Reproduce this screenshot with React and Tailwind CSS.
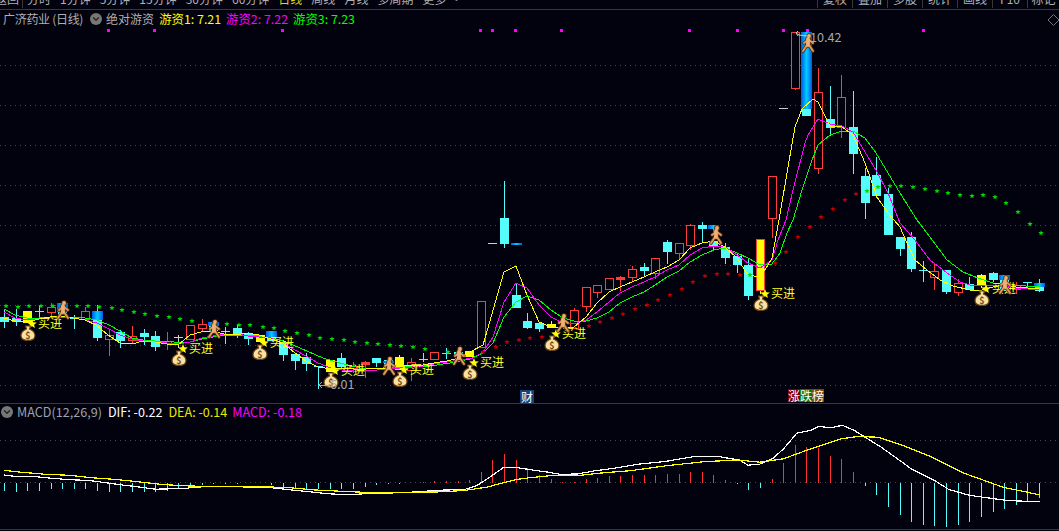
import { ChevronDown } from 'lucide-react'

const LEFT_TABS = ['分时', '1分钟', '5分钟', '15分钟', '30分钟', '60分钟', '日线', '周线', '月线', '多周期', '更多']
const RIGHT_TABS = ['复权', '叠加', '多股', '统计', '画线', 'F10', '标记']

const px = i => Math.round(4 + 11.63 * i) + 0.5

// [index, bodyTop, bodyBottom, high, low, type, blueTop, blueBottom]
const CANDLES = [
  [0, 317, 321, 310, 327, 'c'], [1, 318, 321, 309, 325, 'c'], [2, 311, 322, 311, 322, 'y'], [3, 311, 312, 305, 318, 'c'],
  [4, 307, 312, 303, 315, 'r'], [5, 309, 314, 309, 314, 'c', 303, 312], [6, 318, 319, 315, 328, 'c'], [7, 311, 319, 307, 319, 'r'],
  [8, 311, 337, 305, 340, 'c', 311, 320], [9, 335, 339, 329, 355, 'r'], [10, 332, 340, 330, 347, 'c'], [11, 336, 340, 326, 343, 'r'],
  [12, 333, 336, 329, 344, 'c'], [13, 336, 346, 331, 350, 'c'], [14, 341, 343, 332, 349, 'r'], [15, 337, 338, 335, 347, 'w'],
  [16, 325, 339, 325, 339, 'r'], [17, 324, 328, 319, 330, 'r'], [18, 325, 330, 325, 330, 'c', 322, 326], [19, 331, 332, 327, 343, 'c'],
  [20, 328, 335, 325, 337, 'c'], [21, 334, 338, 332, 344, 'c'], [22, 335, 341, 335, 341, 'y'], [23, 331, 340, 331, 340, 'c', 331, 337],
  [24, 342, 354, 340, 360, 'c'], [25, 354, 360, 354, 369, 'c'], [26, 357, 363, 353, 370, 'c'], [27, 366, 367, 366, 388, 'c'],
  [28, 360, 371, 360, 371, 'y'], [29, 358, 366, 353, 368, 'c'], [30, 366, 368, 362, 372, 'r'], [31, 362, 364, 361, 377, 'f'],
  [32, 358, 362, 358, 366, 'c'], [33, 360, 364, 360, 364, 'c', 361, 363], [34, 357, 369, 355, 369, 'y'], [35, 362, 370, 358, 380, 'r'],
  [36, 359, 360, 353, 361, 'c'], [37, 352, 359, 352, 359, 'r'], [38, 353, 354, 348, 358, 'c'], [39, 352, 356, 352, 356, 'c'],
  [40, 351, 356, 351, 356, 'y'], [41, 301, 347, 301, 347, 'r'], [42, 243, 244, 243, 244, 'w'], [43, 218, 243, 181, 247, 'c'],
  [44, 295, 307, 283, 307, 'c'], [45, 321, 327, 313, 328, 'c'], [46, 323, 328, 323, 331, 'c'], [47, 324, 327, 321, 327, 'y'],
  [48, 321, 323, 321, 323, 'c'], [49, 310, 328, 308, 328, 'r'], [50, 287, 306, 287, 311, 'r'], [51, 285, 292, 285, 297, 'r'],
  [52, 278, 289, 278, 289, 'r'], [53, 277, 279, 276, 290, 'f'], [54, 269, 277, 266, 280, 'r'], [55, 267, 270, 263, 275, 'c'],
  [56, 258, 273, 258, 278, 'r'], [57, 242, 251, 240, 263, 'c'], [58, 243, 253, 243, 258, 'r'], [59, 225, 245, 224, 249, 'r'],
  [60, 225, 228, 222, 241, 'c'], [61, 241, 245, 229, 249, 'c', 225, 229], [62, 247, 257, 243, 263, 'c'], [63, 256, 264, 253, 272, 'c'],
  [64, 265, 295, 258, 299, 'c'], [65, 239, 290, 239, 293, 'Y'], [66, 176, 218, 176, 237, 'r'], [67, 108, 109, 108, 109, 'w'],
  [68, 32, 88, 32, 89, 'r'], [69, 109, 115, 109, 115, 'c', 32, 109], [70, 92, 168, 68, 173, 'r'], [71, 119, 127, 86, 135, 'c'],
  [72, 97, 127, 75, 137, 'r'], [73, 127, 153, 91, 173, 'c'], [74, 176, 202, 168, 218, 'c'], [75, 175, 195, 157, 197, 'c'],
  [76, 194, 234, 188, 234, 'c'], [77, 237, 248, 237, 255, 'c'], [78, 237, 268, 232, 271, 'c'], [79, 270, 271, 261, 281, 'c'],
  [80, 271, 277, 263, 289, 'r'], [81, 270, 291, 270, 293, 'c'], [82, 283, 292, 279, 295, 'r'], [83, 284, 289, 277, 289, 'c'],
  [84, 275, 285, 274, 287, 'y'], [85, 273, 279, 272, 281, 'c'], [86, 277, 290, 275, 290, 'c', 275, 280], [87, 285, 289, 282, 293, 'r'],
  [88, 282, 283, 282, 288, 'c'], [89, 283, 290, 279, 291, 'c', 283, 287],
]

const YELLOW = '4,318 15,321 27,322 39,319 50,317 62,316 73,318 85,320 96,325 108,335 120,343 132,344 143,341 155,342 167,344 178,345 190,335 201,332 213,331 224,334 236,335 247,333 259,335 271,339 283,343 295,353 306,361 318,367 331,369 342,368 354,369 366,369 377,368 388,368 400,365 412,366 423,365 434,363 447,361 459,358 470,352 483,345 504,272 516,266 527,295 539,322 551,327 563,328 574,327 586,317 597,303 609,292 620,287 632,282 644,277 655,272 667,267 679,260 690,248 702,243 714,241 725,247 737,258 748,275 760,277 768,265 772,258 779,220 788,167 795,127 802,109 813,99 818,102 827,120 830,126 842,127 853,135 865,163 877,197 888,213 900,227 907,243 915,260 927,270 940,280 953,286 970,290 982,290 993,287 1004,285 1016,287 1028,288 1039,288'
const MAGENTA = '4,312 15,318 27,320 39,319 50,318 62,317 73,318 85,320 97,323 109,329 120,335 132,339 143,341 155,342 167,343 178,344 190,342 202,338 213,336 225,334 237,334 248,336 259,337 271,338 283,343 295,350 306,356 318,363 331,368 342,370 354,371 366,371 377,370 388,369 400,368 412,367 423,366 434,364 447,362 459,360 473,358 483,352 493,337 504,302 516,283 527,288 539,305 551,317 563,323 574,324 586,320 597,312 609,302 620,293 632,287 644,282 655,277 667,270 679,265 690,255 702,248 714,246 725,247 737,255 748,263 760,268 772,260 778,240 786,220 793,190 805,143 808,135 818,119 830,124 842,126 853,132 865,152 876,170 888,193 900,223 915,240 930,260 947,273 960,282 970,285 983,286 1004,285 1016,288 1039,290'
const GREEN = '4,309 15,315 27,318 39,318 50,317 62,317 73,317 85,318 97,320 109,325 120,331 132,338 143,340 155,341 168,341 180,343 190,342 202,339 213,337 225,335 237,335 248,335 259,336 271,338 283,341 293,345 323,358 340,363 360,368 383,368 403,367 430,366 450,363 470,359 483,353 493,343 504,317 516,302 527,296 539,300 551,310 563,318 574,321 586,321 597,318 609,312 620,303 632,297 644,292 655,285 667,277 679,271 690,262 702,255 714,250 725,248 737,253 748,258 760,265 772,264 780,253 787,233 793,220 802,190 812,160 818,145 830,135 842,131 853,131 865,138 876,153 888,173 900,193 917,220 930,237 947,260 963,272 978,278 993,283 1013,285 1039,287'

const GREEN_STARS = [[6,306],[18,307],[29,306],[41,306],[53,306],[77,306],[88,306],[99,307],[112,308],[122,310],[134,312],[145,314],[157,316],[169,317],[180,319],[192,321],[227,324],[239,325],[250,325],[263,327],[274,328],[285,331],[297,333],[309,335],[320,338],[332,339],[344,340],[355,342],[367,343],[378,344],[390,345],[401,346],[413,347],[425,349],[448,352],[750,275],[867,191],[878,187],[890,186],[901,186],[913,187],[925,189],[937,191],[948,193],[960,195],[972,196],[983,195],[995,197],[1006,203],[1018,212],[1030,224],[1041,233]]
const RED_STARS = [[483,352],[496,347],[507,342],[519,340],[530,338],[542,337],[589,326],[600,322],[612,318],[623,314],[635,309],[647,305],[658,300],[670,295],[682,289],[693,282],[705,276],[717,274],[728,274],[740,275],[775,263],[786,252],[798,237],[810,227],[821,217],[833,209],[845,200],[856,194]]
const TOP_DOTS = [108, 154, 282, 480, 492, 515, 561, 689, 737, 783, 807, 923]

// bag x, bag y
const BUYS = [[28,333],[179,358],[260,352],[331,380],[400,379],[470,372],[552,343],[761,303],[982,298]]
const RUNNERS = [[63,310],[214,329],[389,366],[459,356],[563,323],[716,235],[808,43],[1005,285]]

const MACD_BARS = [-8,-9,-8,-8,-6,-6,-6,-6,-8,-9,-9,-9,-9,-9,-8,-6,-4,-2,-1,-1,-1,0,0,-2,-4,-5,-6,-6,-6,-6,-6,-4,-2,-1,-1,0,1,2,2,2,3,11,23,29,23,15,
  8.5,4.4,1.3,1.3,4.4,5.4,7.4,7.4,8.4,8.4,8.4,9.5,9.5,11.5,11.5,8.4,3.4,-0.5,-7.4,-4.7,4.4,19.6,37.8,35.8,34.8,26.7,23.6,11.5,-2.7,-11.8,-24,-32,-39,-42,-43,-44,-42,-39,-34,-29,-26,-22,-18,-15]

// read off the crops at 2.96x
const zoomLeft = pts => pts.map(([x, y]) => `${(x / 2.96).toFixed(1)},${(400 + y / 2.96).toFixed(1)}`).join(' ')
const zoomRight = pts => pts.map(([x, y]) => `${(530 + x / 2.96).toFixed(1)},${(400 + y / 2.96).toFixed(1)}`).join(' ')
const DIF = zoomLeft([[12,222],[45,226],[100,226],[135,230],[170,233],[205,236],[262,238],[300,243],[350,250],[400,256],[460,264],[545,262],[580,258],[615,256],[790,258],[860,266],[920,272],[965,277],[1030,281],[1100,276],[1165,275],[1235,272],[1300,267],[1375,265],[1410,254],[1440,235],[1490,200],[1530,200],[1568,206]]) + ' ' +
  zoomRight([[50,213],[90,220],[140,219],[190,210],[250,202],[320,190],[400,182],[470,170],[495,166],[550,166],[620,178],[645,193],[680,190],[720,172],[750,145],[790,98],[830,90],[855,78],[890,82],[925,75],[960,90],[1000,115],[1040,140],[1110,190],[1130,205],[1200,240],[1240,265],[1300,282],[1380,293],[1420,298],[1510,301]])
const DEA = zoomLeft([[12,208],[65,214],[135,220],[205,223],[270,230],[340,235],[410,242],[480,250],[545,254],[615,256],[790,257],[860,260],[930,266],[1030,271],[1100,274],[1300,272],[1375,268],[1440,258],[1490,245],[1530,235],[1568,230]]) + ' ' +
  zoomRight([[60,224],[140,224],[200,217],[300,209],[400,195],[520,182],[620,178],[680,184],[750,174],[830,145],[920,115],[970,108],[1030,110],[1100,133],[1180,165],[1280,215],[1400,258],[1510,281]])

function starPoints(cx, cy, r) {
  const pts = []
  for (let i = 0; i < 10; i++) {
    const a = -Math.PI / 2 + (i * Math.PI) / 5
    const d = i % 2 === 0 ? r : r * 0.45
    pts.push(`${(cx + d * Math.cos(a)).toFixed(1)},${(cy + d * Math.sin(a)).toFixed(1)}`)
  }
  return pts.join(' ')
}

function Candle({ c }) {
  const [i, top, bottom, high, low, type, blueTop, blueBottom] = c
  const x = px(i)
  const colors = { c: '#54fcfc', r: '#ff3c3c', f: '#ff3c3c', y: '#ffff00', Y: '#ffff00', w: '#d0d0c8' }
  const color = colors[type]
  const edge = type === 'Y' ? '#ff3c3c' : color
  const isDoji = bottom - top <= 1
  return (
    <g shapeRendering="crispEdges">
      {low - high > 1 && <line x1={x} x2={x} y1={high} y2={low + 1} stroke={color} />}
      {isDoji ? (
        <line x1={x - 4.5} x2={x + 4.5} y1={top + 0.5} y2={top + 0.5} stroke={color} />
      ) : (
        <rect
          x={x - 4}
          y={top + 0.5}
          width={8}
          height={bottom - top}
          stroke={edge}
          fill={type === 'r' ? '#02020f' : color}
        />
      )}
      {blueTop !== undefined && (
        <rect x={x - 5.5} y={blueTop} width={11} height={blueBottom - blueTop} fill="url(#blueBar)" />
      )}
    </g>
  )
}

function Runner({ x, y }) {
  const limbs = 'M0 -3 L-4 0 M1 -3 L5 0 M-1 2 L-5 8 M1 2 L5 8'
  const torso = 'M0 -4 L0 2'
  return (
    <g transform={`translate(${x} ${y})`} fill="none" strokeLinecap="round">
      <path d={limbs} stroke="#5c2c08" strokeWidth="3.4" />
      <path d={torso} stroke="#5c2c08" strokeWidth="5.4" />
      <circle cx="1" cy="-7" r="2.8" fill="#5c2c08" />
      <path d={limbs} stroke="#dc9c5e" strokeWidth="1.9" />
      <path d={torso} stroke="#eeb074" strokeWidth="3.8" />
      <circle cx="1" cy="-7" r="1.9" fill="#eeb074" />
    </g>
  )
}

function BuySignal({ x, y }) {
  return (
    <g>
      <polygon points={starPoints(x + 4, y - 9, 5)} fill="#ffff00" />
      <text x={x + 10} y={y - 5} fontSize="12" fill="#ffff20">买进</text>
      <g transform={`translate(${x} ${y})`}>
        <path d="M-2.5 -7 L2.5 -7 L1.5 -4 C5 -2.5 7 0 7 2.5 C7 6 4 7.5 0 7.5 C-4 7.5 -7 6 -7 2.5 C-7 0 -5 -2.5 -1.5 -4 Z" fill="#f7e2a4" stroke="#6e4210" strokeWidth="1.2" />
        <text x="0" y="5.5" textAnchor="middle" fontSize="9" fontWeight="700" fill="#7a4a10">$</text>
      </g>
    </g>
  )
}

function GridLines({ ys }) {
  return ys.map(y => (
    <line key={y} x1="0" x2="1059" y1={y + 0.5} y2={y + 0.5} stroke="#4a4a4a" strokeDasharray="1 4" shapeRendering="crispEdges" />
  ))
}

function MainChart() {
  return (
    <svg viewBox="0 10 1059 393" className="block w-[1059px] h-[393px]">
      <defs>
        <linearGradient id="blueBar" x1="0" x2="1" y1="0" y2="0">
          <stop offset="0" stopColor="#0058e8" />
          <stop offset="0.5" stopColor="#00ccff" />
          <stop offset="1" stopColor="#0058e8" />
        </linearGradient>
      </defs>
      <GridLines ys={[65, 105, 145, 185, 225, 265, 305, 345, 385]} />
      {TOP_DOTS.map(x => <rect key={x} x={x - 1} y={29} width={3} height={3} fill="#ff00ff" />)}
      {CANDLES.map(c => <Candle key={c[0]} c={c} />)}
      <rect x="511" y="243" width="11" height="2" fill="url(#blueBar)" />
      <polyline points={GREEN} fill="none" stroke="#00ff00" shapeRendering="crispEdges" />
      <polyline points={MAGENTA} fill="none" stroke="#ff00ff" shapeRendering="crispEdges" />
      <polyline points={YELLOW} fill="none" stroke="#ffff00" shapeRendering="crispEdges" />
      {GREEN_STARS.map(([x, y]) => <polygon key={`${x}-${y}`} points={starPoints(x, y, 2.8)} fill="#00d800" />)}
      {RED_STARS.map(([x, y]) => <polygon key={`${x}-${y}`} points={starPoints(x, y, 2.8)} fill="#c00000" />)}
      {BUYS.map(([x, y]) => <BuySignal key={x} x={x} y={y} />)}
      {RUNNERS.map(([x, y]) => <Runner key={x} x={x} y={y} />)}
      <path d="M807 36 L799 35 L796 33 M796 33 L798 31 M796 33 L798 36" fill="none" stroke="#c8c8c8" />
      <text x="810" y="42" fontSize="12.6" fill="#a8a8a8">10.42</text>
      <path d="M330 385 L319 385 M319 385 L322 382 M319 385 L322 388" fill="none" stroke="#a8a8a8" shapeRendering="crispEdges" />
      <text x="330" y="389" fontSize="12.6" fill="#a8a8a8">6.01</text>
      <polygon points="1053.5,14.5 1059,20 1053.5,25.5 1048,20" fill="none" stroke="#777" />
    </svg>
  )
}

function MacdChart() {
  return (
    <svg viewBox="0 404 1059 125" className="block w-[1059px] h-[125px]">
      <GridLines ys={[440, 482]} />
      {MACD_BARS.map((h, i) => h !== 0 && (
        <line
          key={i}
          x1={px(i)}
          x2={px(i)}
          y1={483}
          y2={483 - h}
          stroke={h > 0 ? '#ff3232' : '#54fcfc'}
          shapeRendering="crispEdges"
        />
      ))}
      <polyline points={DIF} fill="none" stroke="#ffffff" strokeWidth="1.2" shapeRendering="crispEdges" />
      <polyline points={DEA} fill="none" stroke="#ffff00" strokeWidth="1.2" shapeRendering="crispEdges" />
    </svg>
  )
}

function CollapseDot() {
  return (
    <span className="flex items-center justify-center w-3 h-3 rounded-full bg-[#777]">
      <ChevronDown size={10} strokeWidth={3} color="#222" />
    </span>
  )
}

export default function App() {
  return (
    <div className="w-[1059px] h-[531px] overflow-hidden bg-[#02020f] font-['Noto_Sans_CJK_SC','Noto_Sans',sans-serif] text-[12px] leading-[14px] text-[#b0b0b0]">
      {/* toolbar, cut off by the top of the window */}
      <div className="flex h-[10px] overflow-hidden border-b border-[#383838]">
        <div className="flex w-[23px] shrink-0 justify-end border-r border-[#383838] h-[18px] -mt-[10px] leading-[18px] overflow-hidden">
          <span className="whitespace-nowrap pr-[3px]">返回</span>
        </div>
        <div className="flex gap-[9px] pl-[4px] h-[18px] -mt-[10px] leading-[18px] whitespace-nowrap">
          {LEFT_TABS.map(t => (
            <span key={t} className={t === '日线' ? 'text-[#d8d820]' : ''}>{t}</span>
          ))}
          <ChevronDown size={11} className="mt-[4px] -ml-[4px]" />
        </div>
        <div className="flex ml-auto h-[18px] -mt-[10px] leading-[18px]">
          {RIGHT_TABS.map(t => (
            <span key={t} className="w-[35px] text-center border-l border-[#383838] last:w-[32px]">{t}</span>
          ))}
        </div>
      </div>

      {/* main k-line panel */}
      <div className="relative h-[393px]">
        <MainChart />
        <div className="absolute left-[3px] top-[2px] flex items-center h-[14px] whitespace-nowrap">
          <span className="tracking-[-0.3px]">广济药业 (日线)</span>
          <span className="ml-[7px]"><CollapseDot /></span>
          <span className="ml-[4px]">绝对游资</span>
          <span className="ml-[5px] text-[12.4px] text-[#ffff00]">游资1: 7.21</span>
          <span className="ml-[5px] text-[12.4px] text-[#ff00ff]">游资2: 7.22</span>
          <span className="ml-[5px] text-[12.4px] text-[#00ff00]">游资3: 7.23</span>
        </div>
        <div className="absolute left-[520px] top-[380px] flex items-center justify-center w-[14px] h-[13px] bg-[#12427a] text-white">财</div>
        <div className="absolute left-[788px] top-[379px] flex h-[13px] text-white">
          <span className="flex items-center justify-center w-[12px] bg-[#7a0000]">涨</span>
          <span className="flex items-center justify-center w-[12px] bg-[#0a780a]">跌</span>
          <span className="flex items-center justify-center w-[12px] bg-[#7a480a]">榜</span>
        </div>
      </div>

      {/* macd panel */}
      <div className="relative h-[126px] border-t border-[#383838]">
        <MacdChart />
        <div className="absolute left-[1px] top-[1px] flex items-center h-[14px] whitespace-nowrap text-[12.6px]">
          <CollapseDot />
          <span className="ml-[4px] text-[#9aa4ac]">MACD(12,26,9)</span>
          <span className="ml-[6px] text-white">DIF: -0.22</span>
          <span className="ml-[6px] text-[#e8e800]">DEA: -0.14</span>
          <span className="ml-[5px] text-[#ff00ff]">MACD: -0.18</span>
        </div>
      </div>
      <div className="border-t border-[#383838]" />
    </div>
  )
}
